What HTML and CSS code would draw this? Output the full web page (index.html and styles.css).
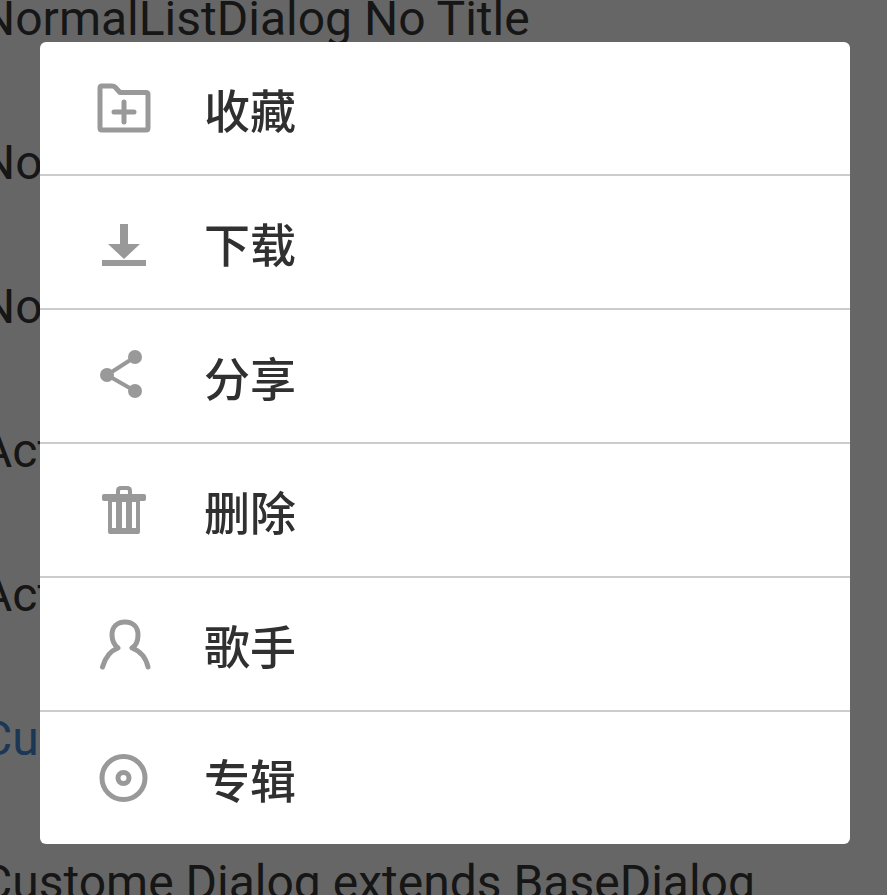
FILE: index.html
```html
<!DOCTYPE html>
<html lang="zh-CN">
<head>
<meta charset="utf-8">
<meta name="viewport" content="width=device-width, initial-scale=1">
<title>Dialog</title>
<link rel="stylesheet" href="styles.css">
</head>
<body>
<ul class="page-list" lang="en">
  <li class="page-item">NormalListDialog No Title</li>
  <li class="page-item">No</li>
  <li class="page-item">No</li>
  <li class="page-item">Act</li>
  <li class="page-item">Act</li>
  <li class="page-item page-item-accent">Cu</li>
  <li class="page-item">Custome Dialog extends BaseDialog</li>
</ul>
<div class="overlay">
  <div class="dialog" role="dialog" aria-modal="true">
    <button class="option" type="button">
      <svg class="icon" viewBox="0 0 56 56" aria-hidden="true"><path class="line" d="M6 6H16Q18 6 19 7L24 12.500H50Q52 12.500 52 14.500V48Q52 50 50 50H6Q4 50 4 48V8Q4 6 6 6ZM28 22V42M18 32H38"/></svg>
      <span class="label">收藏</span>
    </button>
    <button class="option" type="button">
      <svg class="icon" viewBox="0 0 56 56" aria-hidden="true"><path class="solid" d="M24 10H32V30H44L28 45L12 30H24ZM6 46H50V52H6Z"/></svg>
      <span class="label">下载</span>
    </button>
    <button class="option" type="button">
      <svg class="icon" viewBox="0 0 56 56" aria-hidden="true"><path class="line thin" d="M39 9L11 27L39 43"/><circle class="solid" cx="39" cy="9" r="7"/><circle class="solid" cx="11" cy="27" r="7"/><circle class="solid" cx="39" cy="43" r="7"/></svg>
      <span class="label">分享</span>
    </button>
    <button class="option" type="button">
      <svg class="icon" viewBox="0 0 56 56" aria-hidden="true"><path class="line thin" d="M22 13V9Q22 6 25 6H31Q34 6 34 9V13"/><path class="solid" fill-rule="evenodd" d="M8 12H48Q50 12 50 14V17Q50 19 48 19H44V50Q44 52 42 52H14Q12 52 12 50V19H8Q6 19 6 17V14Q6 12 8 12ZM16 20V46H20V20ZM26 20V46H30V20ZM36 20V46H40V20Z"/></svg>
      <span class="label">删除</span>
    </button>
    <button class="option" type="button">
      <svg class="icon" viewBox="0 0 56 56" aria-hidden="true"><path class="line" d="M6.500 51C9 42 14 35 22 32C17 28 16 23 16 19C16 11 21 6 29 6C37 6 42 11 42 19C42 25 41 29 36 32C44 35 50 42 52 51"/></svg>
      <span class="label">歌手</span>
    </button>
    <button class="option" type="button">
      <svg class="icon" viewBox="0 0 56 56" aria-hidden="true"><circle class="line" cx="27.500" cy="28" r="21.500"/><circle class="line" cx="27.500" cy="28" r="5.500"/></svg>
      <span class="label">专辑</span>
    </button>
  </div>
</div>
</body>
</html>
```
FILE: styles.css
```css
* {
  box-sizing: border-box;
}

body {
  margin: 0;
  height: 100vh;
  overflow: hidden;
  background: #fff;
  font-family: Roboto, "Noto Sans CJK SC", sans-serif;
}

.page-list {
  height: 100vh;
  margin: 0;
  padding: 0;
  overflow: hidden;
  list-style: none;
}

.page-item {
  height: 144px;
  margin-left: -19px;
  color: #393939;
  font-size: 48px;
  line-height: 144px;
  white-space: nowrap;
}

.page-item:first-child {
  margin-top: -53px;
}

.page-item-accent {
  color: #418cd7;
}

.overlay {
  position: fixed;
  inset: 0;
  padding: 42px 37px 0 40px;
  background: rgba(0, 0, 0, 0.6);
}

.dialog {
  overflow: hidden;
  border-radius: 6px;
  background: #fff;
}

.option {
  display: flex;
  align-items: center;
  gap: 52px;
  width: 100%;
  padding: 0 56px;
  border: 0;
  background: none;
  color: #303030;
  font: inherit;
  text-align: left;
}

.option + .option {
  border-top: 2px solid #ccc;
}

.icon {
  flex: none;
  width: 56px;
  height: 56px;
}

.line {
  fill: none;
  stroke: #999;
  stroke-width: 5px;
  stroke-linecap: round;
  stroke-linejoin: round;
}

.thin {
  stroke-width: 4px;
}

.solid {
  fill: #999;
}

.label {
  font-family: "Noto Sans CJK SC", sans-serif;
  font-size: 46px;
  font-weight: 500;
  line-height: 132px;
}
```
